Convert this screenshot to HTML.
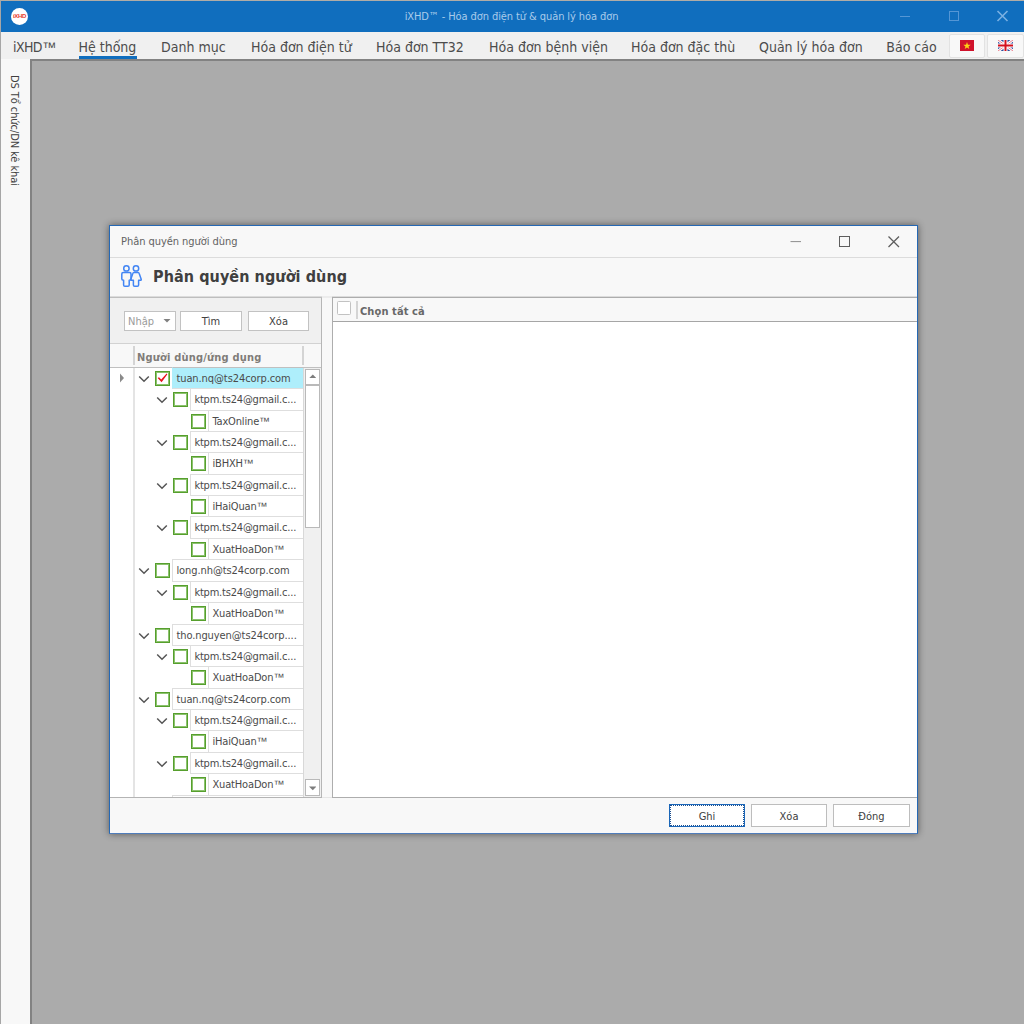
<!DOCTYPE html>
<html lang="vi">
<head>
<meta charset="utf-8">
<title>iXHD™ - Hóa đơn điện tử &amp; quản lý hóa đơn</title>
<style>
*{box-sizing:border-box;margin:0;padding:0}
html,body{width:1024px;height:1024px;overflow:hidden;background:#ababab}
body{position:relative;font-family:"DejaVu Sans Condensed","Liberation Sans",sans-serif;font-size:11px;color:#404040}
.abs{position:absolute}
#frame{left:0;top:0;width:1024px;height:1024px;border-left:1px solid #a6a6a6;border-top:1px solid #b0aca6}
#titlebar{left:1px;top:1px;width:1023px;height:31px;background:#106ebe}
#apptitle{left:0px;top:2px;width:1023px;height:31px;line-height:30px;text-align:center;color:#a9cbea;font-size:11px;letter-spacing:-0.09px}
#menubar{left:1px;top:32px;width:1023px;height:27px;background:#f0f0f0}
.mi{position:absolute;top:37px;height:20px;line-height:20px;font-size:14px;color:#4c4c4c;white-space:nowrap}
#side{left:1px;top:59px;width:29px;height:965px;background:#f8f8f8}
#sidetxt{left:7.6px;top:74.6px;letter-spacing:-0.08px;writing-mode:vertical-rl;font-size:11px;color:#404040;white-space:nowrap;line-height:13px}
#mdi{left:30px;top:59px;width:994px;height:965px;background:#ababab;border-left:2px solid #828282;border-top:2px solid #828282}
#dlg{left:109px;top:225px;width:809px;height:609px;background:#f8f8f8;border:1px solid #2568b4;border-bottom-color:#4f7cba;box-shadow:0 0 7px 0 rgba(0,0,0,.48)}

#dtitle{left:110px;top:226px;width:807px;height:32px;background:#f8f8f8;border-bottom:1px solid #dcdcdc}
#dtitletxt{left:121px;top:235px;line-height:14px;font-size:11px;color:#626262;letter-spacing:-0.05px;white-space:nowrap}
#dhead{left:110px;top:258px;width:807px;height:40px;background:#f8f8f8;border-bottom:1px solid #bebebe;box-shadow:inset 0 -1px 0 #dcdcdc}
#dheadtxt{left:153px;top:266px;line-height:22px;font-size:16px;font-weight:bold;color:#404040;white-space:nowrap;letter-spacing:0.08px}
#lpanel{left:110px;top:298px;width:212px;height:500px;background:#f0f0f0;border-right:1px solid #b6b6b6;border-bottom:1px solid #b4b4b4}
.inp{position:absolute;top:311px;height:20px;background:#fff;border:1px solid #c2c2c2;line-height:19px;font-size:11px;text-align:center;color:#404040}
#thead{left:110px;top:343px;width:211px;height:25px;background:#f8f8f8;border-top:1px solid #d2d2d2;border-bottom:1px solid #c0c0c0}
#theadtxt{left:137px;top:350.5px;line-height:14px;font-size:11px;font-weight:bold;color:#807c78;white-space:nowrap;letter-spacing:0.2px}
.vsep{position:absolute;width:2px;background:#d4d4d4}
#tbody{left:110px;top:368px;width:211px;height:429px;background:#fff;overflow:hidden}
.r{position:absolute;left:0;width:303px}
.r .cell{position:absolute;top:0;bottom:0;right:0;border:1px solid #dedede;border-right:none;padding-left:3.4px;line-height:22px;font-size:11px;color:#4a4a4a;white-space:nowrap;overflow:hidden;background:#fff}
.r.sel .cell{background:#aeeefb;border-left-color:#aeeefb;border-top-color:#c0c0c0}
.r .cb{position:absolute;width:15px;height:15px;border:1px solid #569f2d;box-shadow:inset 0 0 0 1px #8cc26e;background:#fff;top:4px}
.r .cv{position:absolute;width:12px;height:8px;top:8px;fill:none;stroke:#555;stroke-width:1.5}
.tick{position:absolute;left:1px;top:1px;width:11px;height:11px;fill:#e8121d}
.tm{font-family:"Liberation Sans",sans-serif;letter-spacing:0;line-height:0}
.l1 .cell{letter-spacing:-0.08px}.l2 .cell{letter-spacing:-0.2px}.l3 .cell{letter-spacing:-0.15px}
.l1 .cv{left:138px}.l1 .cb{left:155px}.l1 .cell{left:172px}
.l2 .cv{left:156px}.l2 .cb{left:173px}.l2 .cell{left:190px}
.l3 .cb{left:191px}.l3 .cell{left:208px}
#rpanel{left:332px;top:297px;width:585px;height:501px;background:#fff;border:1px solid #adadad;border-right:none}
#rhead{left:333px;top:298px;width:584px;height:24px;background:#f8f8f8;border-bottom:1px solid #a6a6a6}
#rheadtxt{left:360px;top:304.7px;line-height:14px;font-size:11px;font-weight:bold;color:#686868;white-space:nowrap;letter-spacing:0.1px}
#dfoot{left:110px;top:798px;width:807px;height:35px;background:#f8f8f8}
.btn{position:absolute;top:804px;height:23px;background:#fff;border:1px solid #bdbdbd;line-height:23px;font-size:11px;text-align:center;color:#404040}

#appicon{left:11px;top:8px;width:17px;height:17px;border-radius:50%;background:#fff}
#appicon span{position:absolute;left:0;top:0;width:17px;height:17px;line-height:17px;text-align:center;font:bold 6px/17px "Liberation Sans",sans-serif;color:#e8392c;letter-spacing:-0.3px}
.wc{position:absolute;stroke:#5496d5;fill:none;stroke-width:1}
#uline{left:78.6px;top:56px;width:58.5px;height:3px;background:#106ebe}
.flagbtn{position:absolute;top:34.4px;height:23.2px;background:#f8f8f8;border:1px solid #e2e2e2;border-radius:2px}
.flag{position:absolute;top:40px;width:14px;height:11px}
#indcol{left:110px;top:368px;width:25px;height:429px;background:#fff;border-right:2px solid #e4e4e4}
#sbar{left:303px;top:368px;width:18px;height:429px;background:#f0f0f0;border-left:1px solid #d8d8d8}
.sb{position:absolute;left:305px;width:15px;background:#fff;border:1px solid #b9b9b9}
.dc{position:absolute;stroke:#5e5e5e;fill:none;stroke-width:1}
</style>
</head>
<body>
<div id="frame" class="abs"></div>
<div id="titlebar" class="abs"></div>
<div id="apptitle" class="abs">iXHD™ - Hóa đơn điện tử &amp; quản lý hóa đơn</div>
<div id="menubar" class="abs"></div>
<div class="mi" style="left:13px;letter-spacing:-0.6px">iXHD<span class="tm">™</span></div>
<div class="mi" style="left:78.5px">Hệ thống</div>
<div class="mi" style="left:161px">Danh mục</div>
<div class="mi" style="left:251px">Hóa đơn điện tử</div>
<div class="mi" style="left:376px">Hóa đơn TT32</div>
<div class="mi" style="left:489px">Hóa đơn bệnh viện</div>
<div class="mi" style="left:631px">Hóa đơn đặc thù</div>
<div class="mi" style="left:759px">Quản lý hóa đơn</div>
<div class="mi" style="left:886.3px">Báo cáo</div>

<div id="appicon" class="abs"><span>iXHD</span></div>
<svg class="wc" style="left:899px;top:10px;width:12px;height:12px" viewBox="0 0 12 12"><path d="M1 6.5H11"/></svg>
<svg class="wc" style="left:947.6px;top:10.4px;width:12px;height:12px" viewBox="0 0 12 12"><rect x="1.5" y="1.5" width="9" height="9"/></svg>
<svg class="wc" style="left:996px;top:10px;width:13px;height:12px" viewBox="0 0 13 12"><path d="M1.5 1 L11.5 11 M11.5 1 L1.5 11" stroke="#7ab0e2" stroke-width="1.6"/></svg>
<div id="uline" class="abs"></div>
<div class="flagbtn" style="left:949px;width:36px"></div>
<div class="flagbtn" style="left:987px;width:37px"></div>
<svg class="flag" style="left:960px" viewBox="0 0 14 11"><rect width="14" height="11" fill="#d0122b"/><path d="M7 2.1 L7.95 4.7 L10.7 4.75 L8.5 6.4 L9.3 9.05 L7 7.5 L4.7 9.05 L5.5 6.4 L3.3 4.75 L6.05 4.7 Z" fill="#fcd116"/></svg>
<svg class="flag" style="left:998px;width:15px" viewBox="0 0 15 11"><rect width="15" height="11" fill="#2a4a9c"/><path d="M0 0 L15 11 M15 0 L0 11" stroke="#fff" stroke-width="3"/><path d="M0 0 L15 11 M15 0 L0 11" stroke="#e0485a" stroke-width="0.7"/><path d="M7.5 0 V11 M0 5.5 H15" stroke="#fff" stroke-width="4"/><path d="M7.5 0 V11 M0 5.5 H15" stroke="#d4101e" stroke-width="2"/></svg>
<div id="side" class="abs"></div>
<div id="sidetxt" class="abs">DS Tổ chức/DN kê khai</div>
<div id="mdi" class="abs"></div>
<div id="dlg" class="abs"></div>

<div id="dtitle" class="abs"></div>
<div id="dtitletxt" class="abs">Phân quyền người dùng</div>
<div id="dhead" class="abs"></div>
<div id="dheadtxt" class="abs">Phân quyền người dùng</div>
<div id="lpanel" class="abs"></div>
<div class="abs" style="left:322px;top:296px;width:10px;height:2px;background:#ececec"></div>
<div class="abs" style="left:322px;top:797px;width:10px;height:1px;background:#e6e6e6"></div>
<div class="inp" style="left:124px;width:52px;text-align:left;padding-left:3px;color:#9a9a9a">Nhập</div>
<div class="inp" style="left:180px;width:62px">Tìm</div>
<div class="inp" style="left:248px;width:61px">Xóa</div>
<div id="thead" class="abs"></div>
<div id="theadtxt" class="abs">Người dùng/ứng dụng</div>
<div id="tbody" class="abs"></div>
<div id="rows" class="abs" style="left:0;top:0;width:321px;height:797px;overflow:hidden">
<div class="r l1 sel" style="top:367px;height:22px"><svg class="cv" viewBox="0 0 12 8"><path d="M1.2 1.5 L6 6.2 L10.8 1.5"/></svg><span class="cb"><svg class="tick" viewBox="0 0 11 11"><path d="M0.6 5.0 L2.0 4.2 L4.2 6.6 L9.6 0.6 L10.4 1.2 L4.6 9.2 Z"/></svg></span><span class="cell">tuan.nq@ts24corp.com</span></div>
<div class="r l2" style="top:388px;height:23px"><svg class="cv" viewBox="0 0 12 8"><path d="M1.2 1.5 L6 6.2 L10.8 1.5"/></svg><span class="cb"></span><span class="cell">ktpm.ts24@gmail.c...</span></div>
<div class="r l3" style="top:410px;height:22px"><span class="cb"></span><span class="cell">TaxOnline<span class="tm">™</span></span></div>
<div class="r l2" style="top:431px;height:22px"><svg class="cv" viewBox="0 0 12 8"><path d="M1.2 1.5 L6 6.2 L10.8 1.5"/></svg><span class="cb"></span><span class="cell">ktpm.ts24@gmail.c...</span></div>
<div class="r l3" style="top:452px;height:23px"><span class="cb"></span><span class="cell">iBHXH<span class="tm">™</span></span></div>
<div class="r l2" style="top:474px;height:22px"><svg class="cv" viewBox="0 0 12 8"><path d="M1.2 1.5 L6 6.2 L10.8 1.5"/></svg><span class="cb"></span><span class="cell">ktpm.ts24@gmail.c...</span></div>
<div class="r l3" style="top:495px;height:22px"><span class="cb"></span><span class="cell">iHaiQuan<span class="tm">™</span></span></div>
<div class="r l2" style="top:516px;height:23px"><svg class="cv" viewBox="0 0 12 8"><path d="M1.2 1.5 L6 6.2 L10.8 1.5"/></svg><span class="cb"></span><span class="cell">ktpm.ts24@gmail.c...</span></div>
<div class="r l3" style="top:538px;height:22px"><span class="cb"></span><span class="cell">XuatHoaDon<span class="tm">™</span></span></div>
<div class="r l1" style="top:559px;height:23px"><svg class="cv" viewBox="0 0 12 8"><path d="M1.2 1.5 L6 6.2 L10.8 1.5"/></svg><span class="cb"></span><span class="cell">long.nh@ts24corp.com</span></div>
<div class="r l2" style="top:581px;height:22px"><svg class="cv" viewBox="0 0 12 8"><path d="M1.2 1.5 L6 6.2 L10.8 1.5"/></svg><span class="cb"></span><span class="cell">ktpm.ts24@gmail.c...</span></div>
<div class="r l3" style="top:602px;height:23px"><span class="cb"></span><span class="cell">XuatHoaDon<span class="tm">™</span></span></div>
<div class="r l1" style="top:624px;height:22px"><svg class="cv" viewBox="0 0 12 8"><path d="M1.2 1.5 L6 6.2 L10.8 1.5"/></svg><span class="cb"></span><span class="cell">tho.nguyen@ts24corp....</span></div>
<div class="r l2" style="top:645px;height:22px"><svg class="cv" viewBox="0 0 12 8"><path d="M1.2 1.5 L6 6.2 L10.8 1.5"/></svg><span class="cb"></span><span class="cell">ktpm.ts24@gmail.c...</span></div>
<div class="r l3" style="top:666px;height:23px"><span class="cb"></span><span class="cell">XuatHoaDon<span class="tm">™</span></span></div>
<div class="r l1" style="top:688px;height:22px"><svg class="cv" viewBox="0 0 12 8"><path d="M1.2 1.5 L6 6.2 L10.8 1.5"/></svg><span class="cb"></span><span class="cell">tuan.nq@ts24corp.com</span></div>
<div class="r l2" style="top:709px;height:22px"><svg class="cv" viewBox="0 0 12 8"><path d="M1.2 1.5 L6 6.2 L10.8 1.5"/></svg><span class="cb"></span><span class="cell">ktpm.ts24@gmail.c...</span></div>
<div class="r l3" style="top:730px;height:23px"><span class="cb"></span><span class="cell">iHaiQuan<span class="tm">™</span></span></div>
<div class="r l2" style="top:752px;height:22px"><svg class="cv" viewBox="0 0 12 8"><path d="M1.2 1.5 L6 6.2 L10.8 1.5"/></svg><span class="cb"></span><span class="cell">ktpm.ts24@gmail.c...</span></div>
<div class="r l3" style="top:773px;height:23px"><span class="cb"></span><span class="cell">XuatHoaDon<span class="tm">™</span></span></div>
<div class="abs" style="left:172px;top:795px;width:131px;height:2px;border-top:1px solid #dedede;border-left:1px solid #dedede"></div>
</div>

<div id="indcol" class="abs"></div>
<svg class="abs" style="left:119px;top:373px;width:6px;height:10px" viewBox="0 0 6 10"><path d="M1 0.5 L5 5 L1 9.5 Z" fill="#8a8a8a"/></svg>
<div id="sbar" class="abs"></div>
<div class="sb" style="top:369px;height:16px"></div>
<div class="sb" style="top:385px;height:143px"></div>
<div class="sb" style="top:779px;height:17px"></div>
<svg class="abs" style="left:308.5px;top:373.5px;width:7.6px;height:4.8px" viewBox="0 0 8 5"><path d="M0 4.5 L4 0.5 L8 4.5 Z" fill="#7d7d7d"/></svg>
<svg class="abs" style="left:308.5px;top:786.3px;width:7.6px;height:4.8px" viewBox="0 0 8 5"><path d="M0 0.5 L4 4.5 L8 0.5 Z" fill="#7d7d7d"/></svg>
<div class="vsep" style="left:133px;top:346px;height:19px"></div>
<div class="vsep" style="left:302px;top:346px;height:19px"></div>
<svg class="abs" style="left:163px;top:319px;width:8px;height:4px" viewBox="0 0 8 4"><path d="M0.5 0 L4 3.6 L7.5 0 Z" fill="#808080"/></svg>
<svg class="dc" style="left:790px;top:236px;width:12px;height:12px;stroke:#8e8e8e" viewBox="0 0 12 12"><path d="M0.5 5.6H11"/></svg>
<svg class="dc" style="left:839px;top:236px;width:12px;height:12px" viewBox="0 0 12 12"><rect x="0.5" y="0.5" width="10" height="10"/></svg>
<svg class="dc" style="left:888px;top:236px;width:12px;height:12px" viewBox="0 0 12 12"><path d="M0.5 0.5 L11 11 M11 0.5 L0.5 11" stroke-width="1.25"/></svg>
<svg class="abs" style="left:120px;top:264px;width:23px;height:24px" viewBox="0 0 23 24" fill="none" stroke="#4285f4" stroke-width="1.5" stroke-linejoin="round"><circle cx="6.4" cy="4.4" r="2.7"/><circle cx="16" cy="4.4" r="2.7"/><path d="M3.2 8.4 H9.6 Q11 8.4 11 10 V15 Q11 16.2 9.2 16.2 V21 Q9.2 22.3 7.9 22.3 H4.9 Q3.6 22.3 3.6 21 V16.2 Q1.8 16.2 1.8 15 V10 Q1.8 8.4 3.2 8.4 Z"/><path d="M14 8.4 H18 Q18.9 8.4 19.2 9.4 L21.2 15.2 Q21.5 16.2 20.4 16.2 H18.6 V21 Q18.6 22.3 17.3 22.3 H14.7 Q13.4 22.3 13.4 21 V16.2 H11.6 Q10.5 16.2 10.8 15.2 L12.8 9.4 Q13.1 8.4 14 8.4 Z"/></svg>
<div id="rpanel" class="abs"></div>
<div id="rhead" class="abs"></div>
<div class="abs" style="left:337px;top:301px;width:14px;height:14px;background:#fff;border:1px solid #c2c2c2;border-radius:1.5px"></div>
<div class="vsep" style="left:356px;top:301px;height:18px"></div>
<div id="rheadtxt" class="abs">Chọn tất cả</div>
<div id="dfoot" class="abs"></div>
<div class="btn" style="left:669px;width:76px;border:1px solid #1a66b8">Ghi</div>
<div class="btn" style="left:751px;width:76px">Xóa</div>
<div class="btn" style="left:833px;width:77px">Đóng</div>
<div class="abs" style="left:670px;top:805px;width:74px;height:21px;border:1px dotted #1d4f8f"></div>
</body>
</html>
